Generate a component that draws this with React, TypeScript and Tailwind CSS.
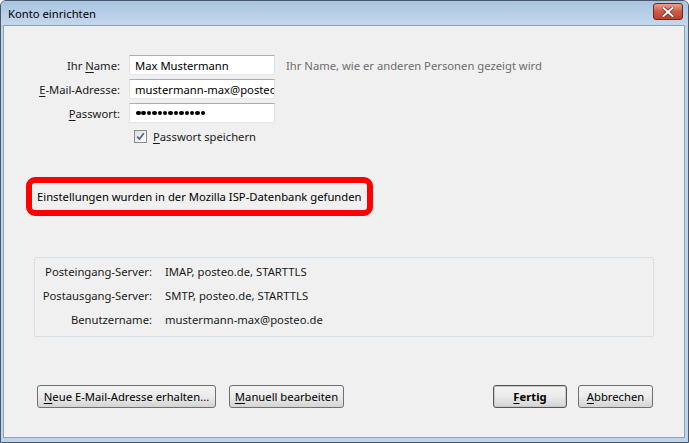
import React from "react";

const U = ({ c }: { c: string }) => <span className="underline underline-offset-2">{c}</span>;

function Input({ value, dots }: { value?: string; dots?: boolean }) {
  return (
    <div className="h-[20px] w-[146px] border border-[#abadb3] border-r-[#dbdfe6] border-b-[#e3e9ef] border-l-[#e2e3ea] bg-white flex items-center pl-[5px] overflow-hidden whitespace-nowrap text-black">
      {dots ? (
        <div className="flex gap-[0.9px] pl-[1px]">
          {Array.from({ length: 13 }).map((_, i) => (
            <div key={i} className="w-[4.5px] h-[4.5px] rounded-full bg-black" />
          ))}
        </div>
      ) : (
        value
      )}
    </div>
  );
}

function Btn({ children, w, def }: { children: React.ReactNode; w: string; def?: boolean }) {
  return (
    <div
      className={`${w} h-[23px] rounded-[3px] border ${def ? "border-[#555555] shadow-[inset_0_0_0_1px_#c8c8c8]" : "border-[#707070]"} bg-gradient-to-b from-[#f4f4f4] via-[#ebebeb] to-[#d4d4d4] flex items-center justify-center text-black whitespace-nowrap`}
    >
      {children}
    </div>
  );
}

export default function App() {
  return (
    <div
      className="w-[689px] h-[443px] bg-[#bcd3ea] border border-[#4a5868] rounded-t-[6px] flex flex-col overflow-hidden text-[11.25px] leading-[15px] text-[#1a1a1a]"
      style={{ fontFamily: '"Noto Sans", "Open Sans", sans-serif' }}
    >
      {/* title bar */}
      <div className="h-[24px] shrink-0 bg-gradient-to-b from-[#a9c4e0] to-[#c4d8ed] flex items-center justify-between pl-[7px] pr-[5px]">
        <span className="text-black">Konto einrichten</span>
        <div className="w-[30px] h-[17px] mt-[-3px] rounded-[3px] border border-[#6b2a20] bg-gradient-to-b from-[#e6a08f] via-[#cf5b43] to-[#c23d25] flex items-center justify-center">
          <svg width="12" height="10" viewBox="0 0 12 10">
            <path d="M1.5 1 L10.5 9 M10.5 1 L1.5 9" stroke="#5a2a22" strokeWidth="3.4" strokeLinecap="square" />
            <path d="M1.5 1 L10.5 9 M10.5 1 L1.5 9" stroke="#ffffff" strokeWidth="2" strokeLinecap="square" />
          </svg>
        </div>
      </div>
      {/* body */}
      <div className="flex-1 ml-[2px] mr-[3px] mb-[4px] border border-[#8da2b8] bg-[#f0f0f0] flex flex-col pt-[29px]">
        {/* form */}
        <div className="grid grid-cols-[116px_146px_auto] gap-x-[9px] gap-y-[4px] items-center">
          <div className="text-right">
            Ihr <U c="N" />ame:
          </div>
          <Input value="Max Mustermann" />
          <div className="pl-[2px] text-[#6d6d6d] whitespace-nowrap">Ihr Name, wie er anderen Personen gezeigt wird</div>
          <div className="text-right">
            <U c="E" />-Mail-Adresse:
          </div>
          <Input value="mustermann-max@posteo.de" />
          <div />
          <div className="text-right">
            <U c="P" />asswort:
          </div>
          <Input dots />
          <div />
        </div>
        <div className="flex items-center gap-[6px] mt-[7px] ml-[130px] h-[13px]">
          <div className="w-[13px] h-[13px] border border-[#8e8f8f] bg-gradient-to-br from-[#dcdcdc] to-[#ffffff] flex items-center justify-center">
            <svg width="9" height="9" viewBox="0 0 9 9">
              <path d="M1.2 4.6 L3.5 7 L7.8 1.3" fill="none" stroke="#4d6185" strokeWidth="1.6" />
            </svg>
          </div>
          <span>
            <U c="P" />asswort speichern
          </span>
        </div>

        {/* red notice */}
        <div className="ml-[22px] mt-[34px] w-[347px] h-[39px] border-[6px] border-[#ff0000] rounded-[9px] flex items-center pl-[5px] bg-[#f0f0f0] text-black whitespace-nowrap">
          Einstellungen wurden in der Mozilla ISP-Datenbank gefunden
        </div>

        {/* server box */}
        <div className="ml-[30px] mt-[41px] w-[620px] h-[80px] border border-[#d5dfe5] rounded-[2px] flex flex-col gap-[6px] pt-[4px]">
          {[
            ["Posteingang-Server:", "IMAP, posteo.de, STARTTLS"],
            ["Postausgang-Server:", "SMTP, posteo.de, STARTTLS"],
            ["Benutzername:", "mustermann-max@posteo.de"],
          ].map(([l, v]) => (
            <div key={l} className="flex items-center h-[18px]">
              <div className="w-[117px] text-right whitespace-nowrap">{l}</div>
              <div className="ml-[13px] whitespace-nowrap">{v}</div>
            </div>
          ))}
        </div>

        {/* buttons */}
        <div className="mt-[48px] ml-[33px] mr-[31px] flex justify-between">
          <div className="flex gap-[13px]">
            <Btn w="w-[179px]">
              <span>
                <U c="N" />eue E-Mail-Adresse erhalten...
              </span>
            </Btn>
            <Btn w="w-[115px]">
              <span>
                <U c="M" />anuell bearbeiten
              </span>
            </Btn>
          </div>
          <div className="flex gap-[11px]">
            <Btn w="w-[74px]" def>
              <span className="font-bold">
                <U c="F" />ertig
              </span>
            </Btn>
            <Btn w="w-[75px]">
              <span>
                <U c="A" />bbrechen
              </span>
            </Btn>
          </div>
        </div>
      </div>
    </div>
  );
}
